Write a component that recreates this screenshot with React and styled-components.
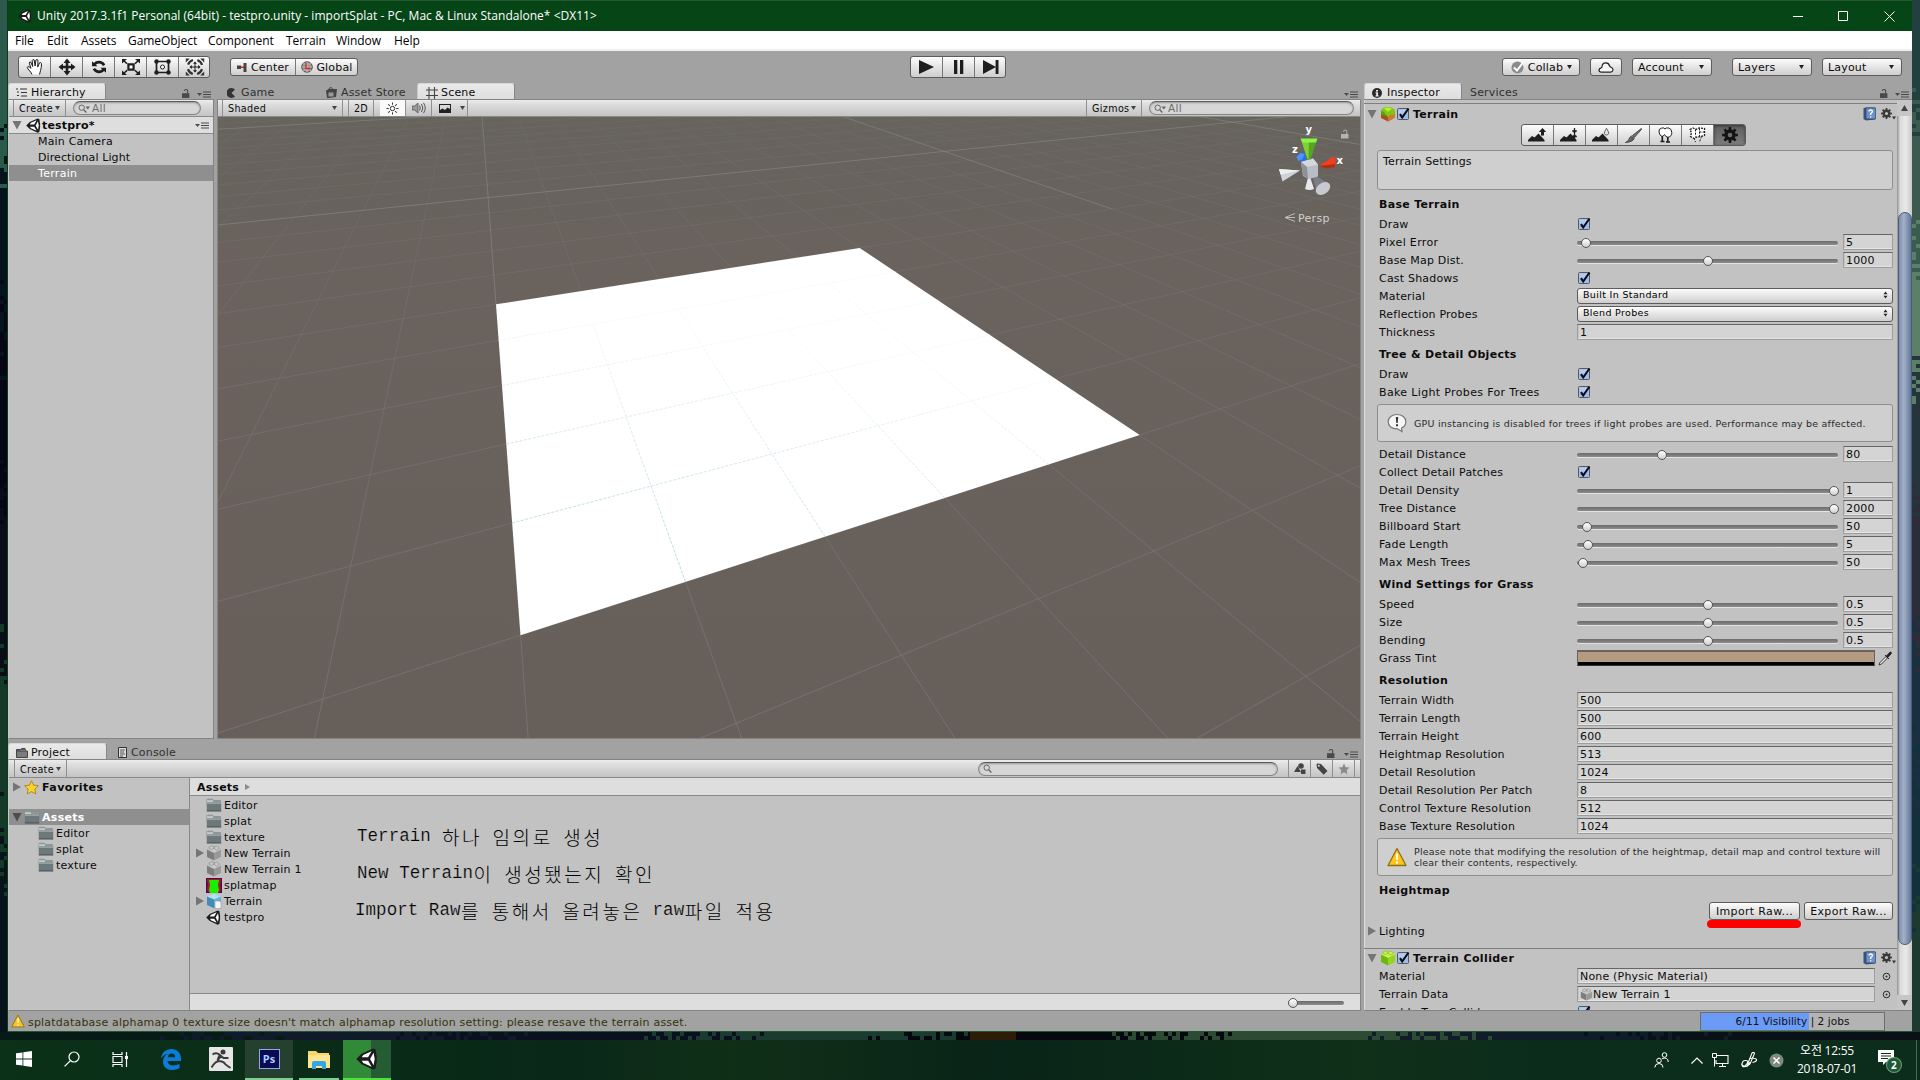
import React from 'react';
import styled, { createGlobalStyle, css } from 'styled-components';

const Global = createGlobalStyle`
  html, body { margin: 0; padding: 0; background: #0b1e16; overflow: hidden; }
  *, *::before, *::after { box-sizing: border-box; }
  svg { display: block; flex: none; }
`;

/* ---------- shell ---------- */
const Screen = styled.div`
  width: 1920px; height: 1080px; display: flex; flex-direction: column; overflow: hidden;
  font: 11px/14px "DejaVu Sans", "Noto Sans CJK KR", sans-serif;
  letter-spacing: 0.18px; color: #0c0c0c; white-space: nowrap; cursor: default;
`;
const Desktop = styled.div`
  height: 1040px; flex: none; display: grid; grid-template: 1032px 8px / 8px 1904px 8px;
`;
const Bottom = styled.div`grid-column: 1 / 4;`;
const Win = styled.div`
  display: flex; flex-direction: column; background: #a2a2a2; border-bottom: 1px solid #1c5a2e;
  box-shadow: 1px 0 0 #1c5a2e, -1px 0 0 #0d3a1c;
  & > * { flex: none; }
`;
const TitleBar = styled.div`
  height: 31px; background: #064516; border-top: 1px solid #25582f; color: #fff; display: flex; align-items: center;
  padding-left: 10px; font: 12px/16px "Open Sans", sans-serif; letter-spacing: 0.02px;
`;
const TitleText = styled.div`margin-left: 5px; flex: 1;`;
const WinButton = styled.div`width: 46px; height: 30px; display: grid; place-items: center; padding-left: ${p => p.$pl || 0}px;`;
const MenuBar = styled.div`
  height: 20px; background: #fff; border-bottom: 2px solid #f0f0f0; display: flex; padding: 1px 0 0 7px;
  font: 12px/18px "Open Sans", sans-serif; letter-spacing: -0.05px; color: #000;
`;
const MenuItem = styled.span`width: ${p => p.$w}px;`;

const ToolStrip = styled.div`height: 32px; display: flex; padding: 5px 10px 0; align-items: flex-start;`;
const bevel = css`
  border: 1px solid #5c5c5c; border-radius: 3px;
  background: linear-gradient(#fcfcfc, #e8e7e7 45%, #cfcdcd);
`;
const ButtonGroup = styled.div`
  ${bevel}
  display: flex; height: ${p => p.$h || 22}px; margin-left: ${p => p.$ml || 0}px; margin-top: ${p => p.$mt || 0}px;
  width: ${p => p.$w ? p.$w + 'px' : 'auto'}; overflow: hidden;
`;
const GroupItem = styled.div`
  width: ${p => p.$w || 32}px; display: flex; align-items: center; justify-content: center; gap: 3px; flex: none;
  ${p => !p.$first && css`border-left: 1px solid #787878;`}
  ${p => p.$on && css`background: linear-gradient(#5f5f5f, #7d7d7d); box-shadow: inset 0 1px 3px #333;`}
`;
const Caption = styled.span`padding-top: 1px;`;
const Spacer = styled.div`flex: 1;`;
const DropButton = styled.div`
  ${bevel}
  height: 18px; width: ${p => p.$w}px; margin: 2px 0 0 ${p => p.$ml || 0}px; display: flex; align-items: center;
  justify-content: ${p => p.$center ? 'center' : 'space-between'}; padding: 0 ${p => p.$center ? 0 : `7px 0 ${p.$pl || 5}px`};
`;
const Body = styled.div`height: 928px; display: flex; gap: 3px;`;
const LeftSide = styled.div`width: 1353px; display: flex; flex-direction: column; gap: 4px; flex: none;`;
const TopRow = styled.div`height: 656px; display: flex; gap: 3px; flex: none;`;

/* ---------- panels ---------- */
const Panel = styled.div`
  width: ${p => p.$w ? p.$w + 'px' : 'auto'}; height: ${p => p.$h}px; display: flex; flex-direction: column; flex: none;
`;
const TabRow = styled.div`height: 16px; display: flex; align-items: stretch; flex: none;`;
const Tab = styled.div`
  width: ${p => p.$w}px; padding-left: ${p => p.$pl || 7}px; display: flex; align-items: center; gap: ${p => p.$gap || 4}px;
  color: ${p => p.$on ? '#0c0c0c' : '#303030'}; padding-top: 3px; line-height: 14px;
  ${p => p.$on && css`
    background: linear-gradient(#e9e9e9, #dedede); border: 1px solid #878787; border-top-color: #d8d8d8; border-bottom: 0; border-left-color: #c8c8c8;
    border-radius: 3px 3px 0 0; padding-top: 2px;`}
`;
const TabTools = styled.div`margin-left: auto; display: flex; align-items: flex-end; gap: ${p => p.$gap || 5}px; padding: 0 3px 1px 0;`;
const RowTools = styled.div`margin-left: auto; display: flex; padding-right: 4px;`;
const Frame = styled.div`
  flex: 1; min-height: 0; background: #c2c2c2; border: 1px solid #838383; display: flex; flex-direction: column;
  ${p => p.$noLeft && css`border-left-color: #c9c9c9;`}
`;
const Bar = styled.div`
  height: ${p => p.$h || 17}px; background: linear-gradient(#ececec, #dcdcdc 30%, #c4c4c4); border-bottom: 1px solid #8a8a8a;
  display: flex; align-items: center; font-size: 9.6px; letter-spacing: 0.35px; flex: none;
`;
const BarCell = styled.div`
  width: ${p => p.$w}px; height: 100%; display: flex; align-items: center; justify-content: ${p => p.$center ? 'center' : 'space-between'};
  padding: 0 ${p => p.$center ? 0 : '5px'}; border-right: ${p => p.$nr ? 0 : 1}px solid #8f8f8f; flex: none;
  ${p => p.$left && css`border-left: 1px solid #8f8f8f;`}
  ${p => p.$on && css`background: #fafafa;`}
`;
const BarText = styled.span`padding-top: 2px;`;
const Search = styled.div`
  height: 14px; width: ${p => p.$w}px; margin-left: ${p => p.$ml || 0}px; border-radius: 7px; border: 1px solid #858585; border-top-color: #5c5c5c;
  background: #d6d6d6; box-shadow: inset 0 1px 2px #999; display: flex; align-items: center; gap: 1px; padding-left: 4px; color: #6d6d6d;
  font-size: 10.5px; line-height: 12px; flex: none;
`;

/* ---------- trees ---------- */
const Row = styled.div`
  height: ${p => p.$h || 16}px; display: flex; align-items: center; padding-left: ${p => p.$pl || 0}px; flex: none;
  font-weight: ${p => p.$bold ? 700 : 400};
  background: ${p => p.$sel ? '#8f8f8f' : p.$light ? '#dedede' : 'transparent'};
  color: ${p => p.$sel ? '#fff' : '#0c0c0c'};
  ${p => p.$line && css`border-bottom: 1px solid #8a8a8a;`}
  ${p => p.$tight && css`margin-bottom: -1px;`}
`;
const Name = styled.span`padding-top: 2px; letter-spacing: ${p => p.$ls === undefined ? 'inherit' : p.$ls + 'px'};`;
const IconSlot = styled.span`width: ${p => p.$w}px; display: flex; flex: none;`;
const ProjectBody = styled.div`flex: 1; display: flex; min-height: 0;`;
const TreeCol = styled.div`width: 181px; border-right: 1px solid #8a8a8a; display: flex; flex-direction: column; flex: none;`;
const ListCol = styled.div`flex: 1; display: flex; flex-direction: column;`;
const ListBody = styled.div`flex: 1; padding-top: 1px; display: flex;`;
const Files = styled.div`width: 167px; display: flex; flex-direction: column;`;
const Notes = styled.div`display: flex; flex-direction: column; padding-top: 21px; color: #000;`;
const Note = styled.div`height: 37px; display: flex; white-space: pre; margin-left: ${p => p.$ml || 0}px;`;
const Latin = styled.span`font: 17.5px/37px "Liberation Mono", monospace; letter-spacing: 0.05px; -webkit-text-stroke: 0.22px #c2c2c2;`;
const Hangul = styled.span`font: 300 19px/37px "Noto Sans CJK KR", sans-serif; letter-spacing: 2.56px; margin-left: 0.5px; margin-right: -0.5px;`;
const ListFoot = styled.div`height: 17px; flex: none; background: #dedede; border-top: 1px solid #8a8a8a; display: flex; align-items: center; justify-content: flex-end; padding-right: 16px;`;

/* ---------- inspector ---------- */
const InspectorBody = styled.div`flex: 1; min-height: 0; display: flex; border-top: 1px solid #838383; border-bottom: 1px solid #838383; background: #c2c2c2;`;
const InspectorList = styled.div`width: 533px; overflow: hidden; display: flex; flex-direction: column; box-shadow: inset 1px 0 0 #dcdcdc; flex: none;`;
const CompHead = styled.div`
  height: ${p => p.$h}px; border-top: 1px solid #7f7f7f; display: flex; align-items: center; padding: 0 2px 0 3px; font-weight: 700; flex: none;
  margin-top: ${p => p.$mt || 0}px; letter-spacing: 0.3px;
`;
const TerrainTools = styled.div`display: flex; height: 23px; padding: 1px 0 0 157px; flex: none;`;
const HelpBox = styled.div`
  margin: ${p => p.$m || '3px'} 4px ${p => p.$mb === undefined ? 3 : p.$mb}px 13px; height: ${p => p.$h || 38}px; flex: none; border: 1px solid #8e8e8e; border-radius: 3px; background: #cfcfcf;
  display: flex; align-items: ${p => p.$top ? 'flex-start' : 'center'}; padding: ${p => p.$top ? '4px 5px' : '0 9px'}; gap: 7px; color: ${p => p.$top ? '#0c0c0c' : '#2a2a2a'};
  ${p => !p.$top && css`font-size: 9.5px; line-height: 11px; letter-spacing: ${p.$ls || 0.2}px;`}
`;
const Head = styled.div`height: 24px; line-height: 27px; padding-left: 15px; font-weight: 700; flex: none; letter-spacing: 0.3px;`;
const Prop = styled.div`height: 18px; display: flex; align-items: center; padding: 0 4px 0 15px; flex: none;`;
const Label = styled.div`width: 198px; flex: none; padding-top: 1px; letter-spacing: ${p => p.$ls || 0.2}px;`;
const Nudge = styled.div`padding-left: 1px;`;
const Field = styled.div`
  height: 16px; ${p => p.$w ? css`width: ${p.$w}px; flex: none;` : css`flex: 1;`}
  border: 1px solid #9d9d9d; border-top-color: #666; background: #d4d4d4; padding: 1px 0 0 2px; line-height: 14px; display: flex; align-items: center;
  box-shadow: inset 0 -1px 0 #e4e4e4, inset 1px 0 0 #c4c4c4;
`;
const Track = styled.div`
  width: ${p => p.$w || 261}px; height: 16px; display: flex; align-items: center; flex: none; margin-right: ${p => p.$mr === undefined ? 5 : p.$mr}px; padding-top: 2px; position: relative;
  &::before { content: ""; width: 100%; height: 4px; border-radius: 2px; background: linear-gradient(#6b6b6b, #8c8c8c); box-shadow: 0 1px 0 #e2e2e2; }
`;
const Knob = styled.div`
  position: absolute; width: 10px; height: 10px; top: 4px; border-radius: 50%; border: 1px solid #585858; background: linear-gradient(#fff, #cfcfcf);
`;
const Select = styled.div`
  ${bevel} flex: 1; height: 16px; font-size: 9.5px; letter-spacing: 0.34px; line-height: 12px; display: flex; align-items: center; justify-content: space-between; padding: 0 4px 2px 5px; color: #000;
`;
const Swatch = styled.div`width: 298px; height: 16px; flex: none; border: 1px solid #6a625c; border-top-width: 2px; background: #b49a80; border-bottom: 1px solid #333; box-shadow: inset 0 -3px 0 #000; margin-right: 3px;`;
const Buttons = styled.div`height: 21px; display: flex; justify-content: flex-end; gap: 4px; padding: 1px 4px 0 0; flex: none;`;
const PushButton = styled.div`
  ${bevel} height: 18px; width: ${p => p.$w}px; display: flex; justify-content: center; align-items: center; position: relative; letter-spacing: 0.35px; padding-top: 1px;
`;
const Mark = styled.div`position: absolute; left: -3px; top: 17px; width: 94px; height: 8px; border-radius: 4px; background: #fd0000;`;
const Scroll = styled.div`
  width: 15px; display: flex; flex-direction: column; align-items: center; background: linear-gradient(90deg, #8f8f8f, #dadada 20%, #e9e9e9 60%, #c8c8c8);
`;
const ScrollGap = styled.div`height: ${p => p.$h}px; width: 15px; flex: none; display: grid; place-items: center; ${p => p.$cap && css`background: #c6c6c6;`}`;
const Thumb = styled.div`width: 14px; height: 733px; flex: none; border-radius: 7px; border: 1px solid #4c5a73; background: linear-gradient(90deg, #7c8fae, #a3b1c8 40%, #63789b);`;

/* ---------- status + taskbar ---------- */
const Status = styled.div`height: 20px; display: flex; align-items: center; padding: 0 27px 0 3px; color: #33330a; letter-spacing: 0.2px;`;
const StatusText = styled.span`padding-top: 4px;`;
const Progress = styled.div`
  margin-left: auto; width: 185px; height: 19px; border: 1px solid #6c6c6c; background: linear-gradient(90deg, #6b9bf7 0 108px, #b3b3b3 108px);
  text-align: center; line-height: 16px; font-size: 10.5px; color: #101010; letter-spacing: 0.05px;
`;
const Taskbar = styled.div`
  height: 40px; flex: none; display: flex; color: #fff;
  background: linear-gradient(90deg, #0b3118, #092a17 22%, #0a2818 30%, #102f17 38%, #092418 52%, #0d2c18 64%, #11301a 71%, #0b2c1b 80%, #0c2d1b);
`;
const Task = styled.div`
  width: ${p => p.$w || 48}px; display: grid; place-items: center; background: ${p => p.$bg || 'none'};
  border-bottom: 2px solid ${p => p.$line || 'transparent'}; margin: 0 ${p => p.$m || 0}px;
`;
const PsTile = styled.div`
  width: 21px; height: 20px; border: 1px solid #8fa9dc; background: #0a0a55; color: #a8cfff; text-align: center; font: 700 11px/17px "Open Sans", sans-serif; letter-spacing: 0;
`;
const Tray = styled.div`display: flex; align-items: center; margin-left: auto;`;
const TrayIcon = styled.div`width: ${p => p.$w}px; display: flex; justify-content: center; margin-right: ${p => p.$mr || 0}px;`;
const Clock = styled.div`width: 80px; text-align: center; font: 12px/18px "Open Sans", "Noto Sans CJK KR", sans-serif; letter-spacing: -0.25px;`;
const Peek = styled.div`width: 4px; height: 40px; border-left: 1px solid #4d6a56;`;
const Badge = styled.div`position: relative; width: 24px; height: 20px;`;
const Count = styled.div`
  position: absolute; left: 9px; top: 8px; width: 14px; height: 14px; border-radius: 50%; background: #1d5a35; box-shadow: 0 0 0 1px #6f9c7d;
  text-align: center; font: 700 10px/14px "Open Sans", sans-serif;
`;

/* ---------- icons ---------- */
const Caret = ({ s = 5, c = '#444' }) => <svg width={s} height={s - 1} viewBox="0 0 5 4"><path d="M0 0h5L2.5 4z" fill={c} /></svg>;
const Fold = ({ open, c = '#757575' }) => (
  <svg width="10" height="10" viewBox="0 0 10 10"><path d={open ? 'M0.5 1h9L5 9.5z' : 'M1 0.5v9L9 5z'} fill={c} /></svg>
);
const UnityLogo = ({ s = 14, face = '#fff' }) => (
  <svg width={s} height={s} viewBox="0 0 20 20">
    <path d="M.3 10 5 5.300 15.500.5l2.300.9L19 9l-.6 1 .6 1-1.200 7.600-2.300.9L5 14.700z" fill="#1c1c1c" />
    <path d="M5.200 8.400 6.600 6.300 14.200 3 11 8.500H5.500zM5.200 11.600 6.600 13.700 14.200 17 11 11.500H5.500zM12.800 10 16 4.300 17 10 16 15.700z" fill={face} />
  </svg>
);
const Lock = ({ c = '#4a4a4a' }) => (
  <svg width="8" height="9" viewBox="0 0 8 9"><path d="M0 4.2h7.4V9H0z" fill={c} /><path d="M2 1.8Q3.7-.4 5.6 1.2V4.4" fill="none" stroke={c} strokeWidth="1.1" /></svg>
);
const PaneMenu = () => (
  <svg width="14" height="7" viewBox="0 0 14 7"><path d="M0 2h5L2.5 5z" fill="#4a4a4a" /><path d="M6 1h8M6 3.5h8M6 6h8" stroke="#4a4a4a" strokeWidth="1.2" /></svg>
);
const Glass = ({ arrow }) => (
  <svg width={arrow ? 13 : 10} height="9" viewBox={arrow ? '0 0 13 9' : '0 0 10 9'}>
    <circle cx="3.7" cy="3.7" r="2.7" fill="none" stroke="#666" /><path d="M5.8 5.8 8.4 8.4" stroke="#666" strokeWidth="1.4" />
    {arrow && <path d="M7.5 2.5H12L9.8 5.5z" fill="#666" />}
  </svg>
);
const Folder = ({ w = 16 }) => (
  <svg width={w} height="14" viewBox="0 0 16 14">
    <path d="M0.5 3V2Q.5.7 2 .7h4Q7.3.7 7.5 2h6.5q1 0 1 1v9.5H1z" fill="#8d9799" /><path d="M1 2.200h6v2H1z" fill="#c3caca" />
    <path d="M0.8 4.500h14.400v8.500H.8z" fill="#6c787a" /><path d="M1 4.500h14v1.300H1z" fill="#a3acad" /><path d="M.8 13h14.400" stroke="#444e50" />
  </svg>
);
const SmallFolder = () => <svg width="12" height="10" viewBox="0 0 12 10"><path d="M.5 3V1.5h4L5.500 .5H9L9.500 2.500" fill="#666" stroke="#444" /><path d="M.5 3h11v6.5H.5z" fill="#7c7c7c" stroke="#444" /></svg>;
const Cube = ({ a = '#c8c8c8', b = '#999', c = '#7d7d7d', s = 16 }) => (
  <svg width={s} height={s} viewBox="0 0 16 16">
    <path d="M1 4.5 8 1.300l7 3.200-7 3.600z" fill={a} /><path d="M1 4.500l7 3.600v7.400L1 12z" fill={c} /><path d="M15 4.500l-7 3.600v7.400L15 12z" fill={b} />
    <path d="M3 3.600V2l3-1.300 2 1v1.500L5.500 4.500zM8 3.400V2l2.500-1 2.500 1.300v1.500L10.500 5z" fill={a} stroke={c} strokeWidth=".5" />
  </svg>
);
const TerrainCube = () => (
  <svg width="16" height="16" viewBox="0 0 16 16">
    <path d="M1 4.500 8 1l7 3.500v7L8 15.500 1 12z" fill="#a4531c" /><path d="M8 8v7.500l7-4V5z" fill="#cf7a2b" />
    <path d="M1 4 4 1.500 8 1l4 .8L15 4v3l-2 2-2-1-3 3-3-3-2 1-2-2z" fill="#7cc814" /><path d="M4 2.200 8 1.500l4 1.200-4 3z" fill="#c3ee2c" /><path d="M1 5l3 1 2 3-1 1-2-1-2-1z" fill="#5aa010" />
  </svg>
);
const Prefab = () => (
  <svg width="16" height="16" viewBox="0 0 16 16"><path d="M1 3.500 8 1l7 2.500L8 6.500z" fill="#b5e0f3" /><path d="M1 3.500 8 6.500v8.800L1 12z" fill="#3f8db8" /><path d="M15 3.500 8 6.500v8.800l7-3z" fill="#63b4dc" /><path d="M9 8h4.500L15 9.500V15.500H9z" fill="#f4f4f4" stroke="#888" strokeWidth=".5" /></svg>
);
const SplatIcon = () => (
  <svg width="16" height="15" viewBox="0 0 16 15"><path d="M0 0h16v15H0z" fill="#4b0a50" /><path d="M1 1h14v3l-1 3 1 4-1 3H2l-1-3 1-5-1-3z" fill="#b3112d" /><path d="M3 2h10l-1 5 1 5-1 3H4L3 12l1-5z" fill="#18f000" /></svg>
);
const Check = () => (
  <svg width="13" height="14" viewBox="0 0 13 14">
    <rect x=".5" y="1.500" width="11" height="11" rx="1" fill="#9fbce6" stroke="#4f5a6a" /><path d="M1.500 2.500h9v4h-9z" fill="#b6cbeb" />
    <path d="M3 7.200 5.200 10.500 11.500 1.500" fill="none" stroke="#0a0a14" strokeWidth="2.100" />
  </svg>
);
const Book = () => (
  <svg width="13" height="14" viewBox="0 0 13 14"><path d="M.5 1 3 .5h9v12L3 13.500.5 12z" fill="#39547d" /><path d="M3 1h9.500v11H3z" fill="#6f93c7" stroke="#27436e" strokeWidth=".7" /><path d="M6 4.600Q6 3 7.700 3t1.700 1.500Q9.400 5.500 7.700 6.500V8M7.700 9.200v1.300" stroke="#fff" strokeWidth="1.300" fill="none" /></svg>
);
const teeth = n => Array.from({ length: n }, (_, i) => (360 / n) * i);
const Cog = ({ s = 12, c = '#3a3a3a', n = 8 }) => (
  <svg width={s} height={s} viewBox="-8 -8 16 16"><circle r="4" fill="none" stroke={c} strokeWidth="3.400" />{teeth(n).map(a => <path key={a} d="M-1.300-5H1.300V-7.900H-1.300z" fill={c} transform={`rotate(${a})`} />)}</svg>
);
const GearMenu = () => <IconSlot $w={14}><Cog s={11} /><svg width="4" height="12" viewBox="0 0 4 12"><path d="M0 8.500h4L2 11.500z" fill="#333" /></svg></IconSlot>;
const Warn = ({ s = 14 }) => (
  <svg width={s} height={s} viewBox="0 0 20 20"><path d="M10 1.500 19 18.500H1z" fill="#fcc41d" stroke="#8e7216" strokeWidth="1.300" strokeLinejoin="round" /><path d="M9 6.500h2.200L10.800 13H9.300zM9 14.500h2v2H9z" fill="#fff" /></svg>
);
const Info = () => (
  <svg width="20" height="20" viewBox="0 0 20 20"><path d="M10 1.500c5 0 8.800 3 8.800 7.200 0 3-1.800 5.300-4.300 6.300l.5 3.500-4.500-2.700C4.500 16 1.200 13 1.200 8.700 1.200 4.500 5 1.500 10 1.500z" fill="#f5f5f5" stroke="#777" strokeWidth="1.200" /><path d="M8.800 4h2.400l-.5 6H9.300zM9 11.300h2v2H9z" fill="#333" /></svg>
);
const Updown = () => <svg width="5" height="8" viewBox="0 0 5 8"><path d="M.5 3.200 2.500 .5 4.500 3.200zM.5 4.800 2.500 7.500 4.500 4.800z" fill="#222" /></svg>;
const Target = () => <svg width="9" height="9" viewBox="0 0 9 9"><circle cx="4.500" cy="4.500" r="3.300" fill="none" stroke="#2c2c2c" /><circle cx="4.500" cy="4.500" r="1" fill="#2c2c2c" /></svg>;
const Dropper = () => (
  <svg width="14" height="15" viewBox="0 0 14 15"><path d="M1 14 2 11.500 8 5.500l1.500 1.500L3.500 13z" fill="#eee" stroke="#333" /><path d="M7 4l4 4M8.500 5 11 2.200Q12.500.5 13.200 1.400T12 4L9.700 6.500z" fill="#222" stroke="#222" /></svg>
);
const star = 'M10 1l2.800 5.900 6.400.8-4.700 4.500 1.200 6.400L10 15.500l-5.700 3.100 1.200-6.400L.8 7.700l6.400-.8z';
const Star = ({ s, fill, stroke = 'none' }) => <svg width={s} height={s} viewBox="0 0 20 20"><path d={star} fill={fill} stroke={stroke} strokeWidth="1.200" /></svg>;

const D = '#1e1e1e';
const toolIcons = [
  <svg width="18" height="18" viewBox="0 0 18 18"><path d="M6 16.500Q5.500 14.500 2 11 .8 9.300 1.800 8.700T5 10.300L3.300 5.200Q3.200 3.500 4.700 4L6.700 8.500 6.200 2.300Q6.800.8 8.200 2l.9 6 .8-6Q11 .8 12 2.300L11.700 9 13.600 4.800Q15 4 15.500 5.500 15.500 10 14.500 12.500L13.500 16.500" fill="#fff" stroke={D} strokeWidth="1" strokeLinejoin="round" /></svg>,
  <svg width="18" height="18" viewBox="0 0 18 18"><path d="M9 2v14M2 9h14" stroke={D} strokeWidth="2.600" /><path d="M9 .5l3.500 4.500h-7zM9 17.500l3.500-4.500h-7zM.5 9l4.500-3.500v7zM17.500 9l-4.500-3.500v7z" fill={D} /></svg>,
  <svg width="16" height="14" viewBox="0 0 16 14"><path d="M3 5Q4.800 2.200 8 2.200T13.200 5.200M13 9Q11.200 11.800 8 11.800T2.800 8.800" fill="none" stroke={D} strokeWidth="2.700" /><path d="M1 1.200v5h5.500zM15 12.800v-5H9.500z" fill={D} /></svg>,
  <svg width="18" height="16" viewBox="0 0 18 16"><path d="M6.400 5.400h5.200v5.200H6.400z" fill="#fff" stroke={D} strokeWidth="2.200" /><path d="M1 1l4 3.600M17 1l-4 3.600M1 15l4-3.600M17 15l-4-3.600" stroke={D} strokeWidth="1.500" /><path d="M0 0h5L0 4.500zM18 0h-5l5 4.500zM0 16h5l-5-4.500zM18 16h-5l5-4.500z" fill={D} /></svg>,
  <svg width="17" height="16" viewBox="0 0 17 16"><path d="M2.500 2.500h12v11h-12z" fill="none" stroke={D} strokeWidth="1.700" /><circle cx="2.500" cy="2.500" r="2.200" fill={D} /><circle cx="14.500" cy="2.500" r="2.200" fill={D} /><circle cx="2.500" cy="13.500" r="2.200" fill={D} /><circle cx="14.500" cy="13.500" r="2.200" fill={D} /><circle cx="8.500" cy="8" r="2" fill="#fff" stroke={D} /></svg>,
  <svg width="20" height="18" viewBox="0 0 20 18"><circle cx="10" cy="9" r="7.300" fill="none" stroke="#333" strokeWidth="2.200" strokeDasharray="7 4.470" strokeDashoffset="-2.200" /><path d="M10 4.500v9M5.500 9h9" stroke={D} /><path d="M10 3.500l2 2.300H8zM10 14.500l2-2.300H8zM4.500 9l2.300-2v4zM15.500 9l-2.300-2v4z" fill={D} /><path d="M.8.500h4L.8 4.500zM19.200.5h-4l4 4zM.8 17.500h4l-4-4zM19.200 17.500h-4l4-4z" fill="#333" /></svg>,
];
const playIcons = [
  <svg width="15" height="14" viewBox="0 0 15 14"><path d="M0 0 15 7 0 14z" fill={D} /></svg>,
  <svg width="10" height="14" viewBox="0 0 10 14"><path d="M0 0h3.300v14H0zM6 0h3.300v14H6z" fill={D} /></svg>,
  <svg width="16" height="14" viewBox="0 0 16 14"><path d="M0 0 13 7 0 14zM12.600 0H15.500v14H12.600z" fill={D} /></svg>,
];
const hills = 'M0 13.500V12L4 8l2.500 1.500L10.500 5.500l6 6.500v1.500z';
const terrainIcons = [
  <svg width="19" height="15" viewBox="0 0 19 15"><path d={hills} fill={D} /><path d="M14.500 0 18.200 4H16V7.500h-3V4h-2.200z" fill={D} /></svg>,
  <svg width="19" height="15" viewBox="0 0 19 15"><path d={hills} fill={D} /><path d="M14.500-.5v12M12.200 3h4.600M12.200 8.500h4.600" stroke={D} strokeWidth="1.300" /><path d="M12.700 4.200h3.600L14.500 2zM12.700 7.200h3.600l-1.800 2.300z" fill={D} /></svg>,
  <svg width="19" height="15" viewBox="0 0 19 15"><path d={hills} fill={D} /><path d="M14.500.3Q16.800 4 16.700 5.300 16.200 7 14.500 7T12.300 5.300Q12.200 4 14.500.3z" fill="#e4e4e4" stroke="#555" strokeWidth=".9" /></svg>,
  <svg width="17" height="15" viewBox="0 0 17 15"><path d="M16.300.5 7.500 7.500l2 1.800L16.800 1z" fill="#777" stroke="#333" strokeWidth=".8" /><path d="M6.500 8l2.700 2.300Q8 14 .5 14.500 4.500 12.500 4.700 9.500z" fill="#666" stroke="#333" strokeWidth=".8" /></svg>,
  <svg width="15" height="16" viewBox="0 0 15 16"><path d="M4.300 9v5.500H2.500h4M9.800 10v5H8h4" stroke={D} strokeWidth="1.700" fill="none" /><path d="M3.500 1.200Q.5 1.500 1 5T4 9.500Q5.500 9 6.500 7.500 7.500 10 10 10.300 14 9.500 13.800 5.500T10.500 1Q8 .5 7 2 5.500.2 3.500 1.200z" fill="#fff" stroke={D} strokeWidth="1" /></svg>,
  <svg width="17" height="16" viewBox="0 0 17 16"><path d="M1 2.500l3-1.500 3 1.500L10 1l5.500.5v7L12 9.500 8 10 5 11.500 1.500 9.500 2.500 6z" fill="#fff" stroke={D} strokeDasharray="2 1" strokeWidth="1.300" /><path d="M5 11l1.500 4M12.500 9.500l-2 5.500M6.500 2.500v7M10.500 1.500v8M10.500 5h5" stroke={D} strokeDasharray="2 1.200" /></svg>,
  <Cog s={16} c="#141414" n={8} />,
];

/* ---------- scene ---------- */
const corners = [[520.5, 635.2], [1139.6, 435], [859.7, 248], [496, 304.3]];
const H = (() => {
  const [[x0, y0], [x1, y1], [x2, y2], [x3, y3]] = corners;
  const dx1 = x1 - x2, dx2 = x3 - x2, sx = x0 - x1 + x2 - x3;
  const dy1 = y1 - y2, dy2 = y3 - y2, sy = y0 - y1 + y2 - y3;
  const det = dx1 * dy2 - dx2 * dy1;
  const g = (sx * dy2 - dx2 * sy) / det, h = (dx1 * sy - sx * dy1) / det;
  return { a: x1 - x0 + g * x1, b: x3 - x0 + h * x3, c: x0, d: y1 - y0 + g * y1, e: y3 - y0 + h * y3, f: y0, g, h };
})();
const depth = (u, v) => 1 + (H.g * u + H.h * v) / 5;
const project = (u, v) => {
  const w = depth(u, v);
  return [(H.c + (H.a * u + H.b * v) / 5) / w, (H.f + (H.d * u + H.e * v) / 5) / w].map(n => n.toFixed(1));
};
const segment = (f, lo, hi) => {
  let s = null, e = null;
  for (let t = lo; t <= hi; t += 0.1) {
    const [u, v] = f(t);
    if (depth(u, v) > 0.12) { if (s === null) s = t; e = t; }
  }
  if (s === null) return '';
  return `M${project(...f(s)).join(' ')}L${project(...f(e)).join(' ')}`;
};
const range = (a, b) => Array.from({ length: b - a + 1 }, (_, i) => a + i);
const minor = range(-24, 44).map(k => segment(t => [k, t], -24, 44) + segment(t => [t, k], -24, 44)).join('');
const major = [-10, 0, 10, 20].map(k => segment(t => [k, t], 5, 100)).join('') + [10, 20].map(k => segment(t => [t, k], -60, 100)).join('');
const inner = [1, 2, 3, 4].map(k => segment(t => [k, t], 0, 4.1) + segment(t => [t, k], 0, 5)).join('');

const Scene = () => (
  <svg width="1142" height="621" viewBox="218 117 1142 621">
    <defs>
      <linearGradient id="fade" x1="0" y1="0" x2="0" y2="1"><stop offset="0" stopColor="#fff" stopOpacity=".25" /><stop offset=".25" stopColor="#fff" stopOpacity=".45" /><stop offset="1" stopColor="#fff" stopOpacity=".9" /></linearGradient>
      <mask id="m" maskUnits="userSpaceOnUse" x="218" y="117" width="1142" height="621"><rect x="218" y="117" width="1142" height="621" fill="url(#fade)" /></mask>
      <linearGradient id="lines" gradientUnits="userSpaceOnUse" x1="600" y1="320" x2="560" y2="600"><stop offset="0" stopColor="#f2f8fa" /><stop offset="1" stopColor="#98c8d4" /></linearGradient>
      <linearGradient id="sky" x1="0" y1="0" x2="0" y2="1"><stop offset="0" stopColor="#67635d" /><stop offset=".3" stopColor="#6a625d" /><stop offset="1" stopColor="#67605a" /></linearGradient>
    </defs>
    <rect x="218" y="117" width="1142" height="621" fill="url(#sky)" />
    <g mask="url(#m)"><path d={minor} stroke="#85888a" strokeOpacity=".6" strokeWidth=".9" fill="none" /></g>
    <path d={major} stroke="#8c9191" strokeOpacity=".42" strokeWidth="1" fill="none" />
    <path d={`M${corners.map(p => p.join(' ')).join('L')}z`} fill="#fff" />
    <path d={inner} stroke="url(#lines)" strokeWidth=".8" strokeDasharray="3 1.500" fill="none" />
    <g fontFamily="DejaVu Sans, sans-serif" fontWeight="700" fontSize="10" fill="#fff">
      <text x="1305.500" y="133">y</text><text x="1292" y="152.500">z</text><text x="1336.500" y="163.500">x</text>
    </g>
    <path d="M1296.500 156l4-3.500 5 1 1 7-6 1z" fill="#2b6fe6" /><path d="M1296.500 157l4-4 4 1-2 5-4 2z" fill="#4c93ff" />
    <path d="M1300 170.500 1279 169l3.500 12.500z" fill="#d0d3d8" /><path d="M1279 169l21 1.500-19.500 4z" fill="#eceef0" />
    <path d="M1309 174l5 15q-4.500 2-9 0z" fill="#e8e8ea" />
    <path d="M1312 174l17 9.500-12 9.500z" fill="#7a7e84" /><ellipse cx="1323" cy="188.500" rx="8" ry="5.500" fill="#c8cacf" transform="rotate(-35 1323 188.500)" />
    <path d="M1301 162l12-3.500 5 6v12l-9 2.500-6-3z" fill="#b9bdc6" /><path d="M1301 162l12-3.500 5 6-11 2.500z" fill="#d4d7de" /><path d="M1301 162l6 5 1 12-5-4z" fill="#8d9199" />
    <path d="M1301 139.500h16l-6.500 20h-3z" fill="#56a520" /><path d="M1301 139.500h8l-.5 20h-1z" fill="#7fcf35" /><path d="M1300.500 138.500h17l-1.500 4h-13.500z" fill="#8bf545" />
    <path d="M1319 166l13.500-9 3 1v8.500l-7 1.500z" fill="#f2401c" /><path d="M1319 166l16-2v3l-8 1.500z" fill="#b32c10" />
    <path d="M1341 134h7.500v4.500h-7.500z" fill="#b6b3b1" /><path d="M1343 131.500q2-2.500 3.800-.7v3.700" fill="none" stroke="#b6b3b1" />
    <path d="M1295 213.500l-10 4 10 4M1285 217.500h10" fill="none" stroke="#c6c4c2" strokeWidth=".9" />
    <text x="1298" y="221.500" fontFamily="DejaVu Sans, sans-serif" fontSize="11" letterSpacing=".3" fill="#d3d1cf">Persp</text>
  </svg>
);

/* ---------- wallpaper ---------- */
const palettes = {
  left: ['#2b5a4c', '#04141a', '#050612', '#0a0d18', '#123a26', '#06131a'],
  right: ['#234040', '#3d5a50', '#5c7f68', '#26343c', '#2d2d3a', '#1a2f40', '#15303d', '#1c3a30'],
  bottom: ['#061a16', '#101a2a', '#0a1020', '#1b3a30', '#05080e', '#2c4a34', '#101c2a', '#0a1018'],
};
const Wallpaper = ({ w, h, kind }) => {
  const cols = palettes[kind];
  const long = Math.max(w, h);
  const cells = [];
  let seed = kind.length * 97;
  const rnd = () => ((seed = (seed * 16807) % 2147483647) / 2147483647);
  for (let t = 0; t < long; t += 4) {
    for (let k = 0; k < 8; k += 4) {
      const base = cols[Math.min(cols.length - 1, Math.floor((t / long) * cols.length + (rnd() - 0.5) * 0.7 + 0.1))] || cols[0];
      cells.push(w > h ? <rect key={t + '-' + k} x={t} y={k} width="4" height="4" fill={base} /> : <rect key={t + '-' + k} x={k} y={t} width="4" height="4" fill={base} />);
    }
  }
  return <svg width={w} height={h}>{cells}{kind === 'bottom' && <path d="M970 0h46v8h-46z" fill="#2e1c08" />}</svg>;
};

/* ---------- data ---------- */
const menus = [['File', 32], ['Edit', 34], ['Assets', 47], ['GameObject', 80], ['Component', 78], ['Terrain', 50], ['Window', 58], ['Help', 40]];
const settings = [
  ['head', 'Base Terrain'],
  ['check', 'Draw'], ['slider', 'Pixel Error', '5', 8.5], ['slider', 'Base Map Dist.', '1000', 130.5], ['check', 'Cast Shadows'],
  ['select', 'Material', 'Built In Standard'], ['select', 'Reflection Probes', 'Blend Probes'], ['field', 'Thickness', '1'],
  ['head', 'Tree & Detail Objects'],
  ['check', 'Draw'], ['check', 'Bake Light Probes For Trees'], ['info'],
  ['slider', 'Detail Distance', '80', 84.5], ['check', 'Collect Detail Patches'],
  ['slider', 'Detail Density', '1', 257], ['slider', 'Tree Distance', '2000', 257], ['slider', 'Billboard Start', '50', 9.5],
  ['slider', 'Fade Length', '5', 10.5], ['slider', 'Max Mesh Trees', '50', 5.5],
  ['head', 'Wind Settings for Grass'],
  ['slider', 'Speed', '0.5', 130.5], ['slider', 'Size', '0.5', 130.5], ['slider', 'Bending', '0.5', 130.5], ['color', 'Grass Tint'],
  ['head', 'Resolution'],
  ['field', 'Terrain Width', '500'], ['field', 'Terrain Length', '500'], ['field', 'Terrain Height', '600'], ['field', 'Heightmap Resolution', '513'],
  ['field', 'Detail Resolution', '1024'], ['field', 'Detail Resolution Per Patch', '8'], ['field', 'Control Texture Resolution', '512'], ['field', 'Base Texture Resolution', '1024'],
];
const wideLabels = { 'Bake Light Probes For Trees': 0.35, 'Pixel Error': 0.32, 'Control Texture Resolution': 0.3, 'Max Mesh Trees': 0.3 };
const files = [
  ['Editor', <Folder />], ['splat', <Folder />], ['texture', <Folder />], ['New Terrain', <Cube />, true], ['New Terrain 1', <Cube />],
  ['splatmap', <SplatIcon />], ['Terrain', <Prefab />, true], ['testpro', <UnityLogo s={15} />],
];

const Slider = ({ at, w, mr }) => <Track $w={w} $mr={mr}><Knob style={{ left: at - 5 }} /></Track>;
const Setting = ({ row }) => {
  const [kind, label, value, at] = row;
  if (kind === 'head') return <Head>{label}</Head>;
  if (kind === 'info') return <HelpBox $ls={0.22}><Info /><span>GPU instancing is disabled for trees if light probes are used. Performance may be affected.</span></HelpBox>;
  return (
    <Prop>
      <Label $ls={wideLabels[label]}>{label}</Label>
      {kind === 'check' && <Nudge><Check /></Nudge>}
      {kind === 'slider' && <><Slider at={at} /><Field $w={50}>{value}</Field></>}
      {kind === 'select' && <Select><span>{value}</span><Updown /></Select>}
      {kind === 'field' && <Field>{value}</Field>}
      {kind === 'color' && <><Swatch /><Dropper /></>}
    </Prop>
  );
};
const NoteLine = ({ children, ml }) => (
  <Note $ml={ml}>{children.split(/([가-힣]+)/).map((s, i) => i % 2 ? <Hangul key={i}>{s}</Hangul> : <Latin key={i}>{s}</Latin>)}</Note>
);
const Buttonset = ({ icons, on, ...rest }) => (
  <ButtonGroup {...rest}>{icons.map((ic, i) => <GroupItem key={i} $first={!i} $w={i ? 32 : 31} $on={i === on}>{ic}</GroupItem>)}</ButtonGroup>
);

const Hierarchy = () => (
  <Panel $w={206} $h={656}>
    <TabRow>
      <Tab $on $w={98}><svg width="11" height="10" viewBox="0 0 11 10"><path d="M0 1h2M1 4h2M1 7.500h2M4 1h7M5 4.500h6M5 8h6" stroke="#333" strokeWidth="1.200" /></svg>Hierarchy</Tab>
      <TabTools $gap={7}><Lock /><PaneMenu /></TabTools>
    </TabRow>
    <Frame $noLeft>
      <Bar><BarCell $w={5} $center /><BarCell $w={52}><BarText>Create</BarText><Caret /></BarCell><Search $w={128} $ml={7}><Glass arrow />All</Search></Bar>
      <Row $h={17} $pl={3} $bold $light $line $tight>
        <IconSlot $w={14}><Fold open /></IconSlot><IconSlot $w={16}><UnityLogo s={15} /></IconSlot><Name>testpro*</Name><RowTools><PaneMenu /></RowTools>
      </Row>
      <Row $pl={29}><Name>Main Camera</Name></Row>
      <Row $pl={29}><Name $ls={0.1}>Directional Light</Name></Row>
      <Row $pl={29} $sel><Name $ls={0.3}>Terrain</Name></Row>
    </Frame>
  </Panel>
);

const ScenePanel = () => (
  <Panel $w={1144} $h={656}>
    <TabRow>
      <Tab $w={98} $pl={10} $gap={5}><svg width="9" height="10" viewBox="0 0 9 10"><path d="M8 1.500A5 5 0 1 0 8 8.500L4.500 5z" fill="#333" /></svg>Game</Tab>
      <Tab $w={102} $pl={11} $gap={4}><svg width="11" height="11" viewBox="0 0 11 11"><path d="M0 3.500 3 2h8l-1 8-7 1H1z" fill="#444" /><path d="M3 5V1.500Q5-.5 6.500 1.500V5" stroke="#444" fill="none" /><path d="M2.500 5.500h5v4h-5z" fill="#999" /></svg>Asset Store</Tab>
      <Tab $on $w={98} $pl={8} $gap={3}><svg width="12" height="12" viewBox="0 0 12 12"><path d="M3 0v12M8.500 0v12M0 3h12M0 8.500h12" stroke="#444" strokeWidth="1.100" /></svg>Scene</Tab>
      <TabTools><PaneMenu /></TabTools>
    </TabRow>
    <Frame>
      <Bar>
        <BarCell $w={5} $center />
        <BarCell $w={120}><BarText>Shaded</BarText><Caret /></BarCell>
        <BarCell $w={6} $center />
        <BarCell $w={25} $center><BarText>2D</BarText></BarCell>
        <BarCell $w={6} $center $nr />
        <BarCell $w={26} $center $on><svg width="13" height="13" viewBox="-6.500 -6.500 13 13"><circle r="2.200" fill="none" stroke="#333" />{teeth(8).map(a => <path key={a} d="M0-3.800V-6" stroke="#333" transform={`rotate(${a})`} />)}</svg></BarCell>
        <BarCell $w={26} $center><svg width="14" height="12" viewBox="0 0 14 12"><path d="M0 4h2.500L6 1v10L2.500 8H0z" fill="#999" stroke="#555" strokeWidth=".8" /><path d="M7.500 3.500q1.500 2.500 0 5M9.500 2q2.600 4 0 8M11.500.8q3.500 5.200 0 10.400" fill="none" stroke="#555" /></svg></BarCell>
        <BarCell $w={26} $center $nr><svg width="12" height="9" viewBox="0 0 12 9"><path d="M0 0h12v9H0z" fill="#222" /><path d="M1 1h10v4L8.500 3.500 6 6 3.500 4.500 1 6z" fill="#d8d8d8" /></svg></BarCell>
        <BarCell $w={10} $center><Caret /></BarCell>
        <Spacer />
        <BarCell $w={56} $left><BarText>Gizmos</BarText><Caret /></BarCell>
        <Search $w={205} $ml={7}><Glass arrow />All</Search>
        <IconSlot $w={6} />
      </Bar>
      <Scene />
    </Frame>
  </Panel>
);

const Project = () => (
  <Panel $h={268}>
    <TabRow>
      <Tab $on $w={99} $gap={3}><SmallFolder />Project</Tab>
      <Tab $w={100} $pl={11}><svg width="9" height="11" viewBox="0 0 9 11"><path d="M.5.5h8v10h-8z" fill="#ddd" stroke="#333" /><path d="M2 3h5M2 5h4M2 7h5M2 9h3" stroke="#333" strokeWidth=".8" /></svg>Console</Tab>
      <TabTools $gap={9}><Lock /><PaneMenu /></TabTools>
    </TabRow>
    <Frame $noLeft>
      <Bar $h={18}>
        <BarCell $w={6} $center /><BarCell $w={52}><BarText>Create</BarText><Caret /></BarCell>
        <Spacer />
        <Search $w={300}><Glass /></Search><IconSlot $w={10} />
        <BarCell $w={23} $center $left><svg width="12" height="11" viewBox="0 0 12 11"><circle cx="7" cy="3" r="2.800" fill="#444" /><path d="M0 9l3.500-6L7 9zM7 6.500h4.500V11H7z" fill="#444" /></svg></BarCell>
        <BarCell $w={22} $center><svg width="12" height="12" viewBox="0 0 12 12"><path d="M.5 1 1.500.5 5 1l6.500 7-3.800 3.700L1 5z" fill="#444" /><circle cx="2.800" cy="2.800" r="1" fill="#ddd" /></svg></BarCell>
        <BarCell $w={22} $center><Star s={12} fill="#8a8a8a" /></BarCell>
        <IconSlot $w={5} />
      </Bar>
      <ProjectBody>
        <TreeCol>
          <Row $h={18} $pl={3} $bold><IconSlot $w={12}><Fold /></IconSlot><IconSlot $w={18}><Star s={15} fill="#fbd22c" stroke="#a08420" /></IconSlot><Name $ls={0.45}>Favorites</Name></Row>
          <Row $h={13} />
          <Row $pl={3} $bold $sel><IconSlot $w={12}><Fold open c="#4d4d4d" /></IconSlot><IconSlot $w={18}><Folder /></IconSlot><Name $ls={0.3}>Assets</Name></Row>
          {['Editor', 'splat', 'texture'].map(n => <Row key={n} $pl={29}><IconSlot $w={18}><Folder /></IconSlot><Name>{n}</Name></Row>)}
        </TreeCol>
        <ListCol>
          <Row $h={18} $pl={7} $bold $light $line><IconSlot $w={48}><Name>Assets</Name></IconSlot><svg width="5" height="6"><path d="M0 0v6l5-3z" fill="#8a8a8a" /></svg></Row>
          <ListBody>
            <Files>
              {files.map(([n, icon, fold]) => <Row key={n} $pl={5}><IconSlot $w={11}>{fold && <Fold />}</IconSlot><IconSlot $w={18}>{icon}</IconSlot><Caption>{n}</Caption></Row>)}
            </Files>
            <Notes>
              <NoteLine>Terrain 하나 임의로 생성</NoteLine>
              <NoteLine>New Terrain이 생성됐는지 확인</NoteLine>
              <NoteLine ml={-2}>Import Raw를 통해서 올려놓은 raw파일 적용</NoteLine>
            </Notes>
          </ListBody>
          <ListFoot><Slider at={5} w={56} mr={0} /></ListFoot>
        </ListCol>
      </ProjectBody>
    </Frame>
  </Panel>
);

const Inspector = () => (
  <Panel $w={548} $h={928}>
    <TabRow>
      <Tab $on $w={98} $gap={5}><svg width="10" height="10" viewBox="0 0 10 10"><circle cx="5" cy="5" r="5" fill="#2b2b2b" /><path d="M4 2h2v1.500H4zM3.500 4.300H6V7.500h.8v1H3.400v-1h.8V5.200h-.7z" fill="#eee" /></svg>Inspector</Tab>
      <Tab $w={80} $pl={8}>Services</Tab>
      <TabTools $gap={7}><Lock /><PaneMenu /></TabTools>
    </TabRow>
    <InspectorBody>
      <InspectorList>
        <CompHead $h={20} $mt={3}>
          <IconSlot $w={13}><Fold open /></IconSlot><IconSlot $w={17}><TerrainCube /></IconSlot><IconSlot $w={16}><Check /></IconSlot><Name>Terrain</Name>
          <Spacer /><IconSlot $w={18}><Book /></IconSlot><GearMenu />
        </CompHead>
        <TerrainTools><Buttonset $w={225} icons={terrainIcons} on={6} /></TerrainTools>
        <HelpBox $top $h={40} $mb={1} $m="4px">Terrain Settings</HelpBox>
        {settings.map((r, i) => <Setting key={i} row={r} />)}
        <HelpBox $mb={1} $ls={0.155}><Warn s={20} /><span>Please note that modifying the resolution of the heightmap, detail map and control texture will<br />clear their contents, respectively.</span></HelpBox>
        <Head>Heightmap</Head>
        <Buttons><PushButton $w={91}>Import Raw...<Mark /></PushButton><PushButton $w={89}>Export Raw...</PushButton></Buttons>
        <Row $h={18} $pl={3}><IconSlot $w={12}><Fold /></IconSlot><Caption>Lighting</Caption></Row>
        <CompHead $h={19} $mt={8}>
          <IconSlot $w={13}><Fold open /></IconSlot><IconSlot $w={17}><Cube a="#c6f04c" b="#8fd61c" c="#6cb80e" /></IconSlot><IconSlot $w={16}><Check /></IconSlot><Name $ls={0.4}>Terrain Collider</Name>
          <Spacer /><IconSlot $w={18}><Book /></IconSlot><GearMenu />
        </CompHead>
        <Prop><Label>Material</Label><Field $w={298}>None (Physic Material)</Field><IconSlot $w={7} /><Target /></Prop>
        <Prop><Label>Terrain Data</Label><Field $w={298}><Cube s={13} />New Terrain 1</Field><IconSlot $w={7} /><Target /></Prop>
        <Prop><Label>Enable Tree Colliders</Label><Nudge><Check /></Nudge></Prop>
      </InspectorList>
      <Scroll>
        <ScrollGap $h={16} $cap><svg width="7" height="6"><path d="M0 6h7L3.500 0z" fill="#444" /></svg></ScrollGap>
        <ScrollGap $h={96} /><Thumb /><ScrollGap $h={50} />
        <ScrollGap $h={15} $cap><svg width="7" height="6"><path d="M0 0h7L3.500 6z" fill="#444" /></svg></ScrollGap>
      </Scroll>
    </InspectorBody>
  </Panel>
);

const TaskIcons = () => (
  <>
    <Task><svg width="16" height="16" viewBox="0 0 16 16"><path d="M0 2.300 6.500 1.400V7.600H0zM7.300 1.300 16 0v7.600H7.300zM0 8.400h6.500v6.200L0 13.700zM7.300 8.400H16V16l-8.700-1.300z" fill="#fff" /></svg></Task>
    <Task><svg width="16" height="16" viewBox="0 0 16 16"><circle cx="10" cy="6" r="5" fill="none" stroke="#fff" strokeWidth="1.200" /><path d="M6.400 9.600 .6 15.400" stroke="#fff" strokeWidth="1.300" /></svg></Task>
    <Task><svg width="17" height="15" viewBox="0 0 17 15"><path d="M1 0v2.500h9V0M1 15v-2.500h9V15M1 4.500h9v6H1zM14.500 0v15" fill="none" stroke="#fff" strokeWidth="1.200" /><path d="M13 4h3v3h-3z" fill="#fff" /></svg></Task>
    <Task $w={54}><svg width="20" height="21" viewBox="0 0 20 21"><path d="M0 9.500C.8 3.500 5 0 10.500 0 16.500 0 20 4.500 20 9.500v2.500H6.500c.3 3 2.800 4.500 6 4.500 2.300 0 4.300-.6 6-1.700v4.300C16.700 20.400 14.300 21 11.500 21 5.500 21 2 17.500 2 12.500 2 9 4 6.300 7 4.800 4 5.300 1.500 7 0 9.500zM6.800 8.300h7.400C14.200 6 13 4.500 10.600 4.500 8.500 4.500 7.200 6 6.800 8.300z" fill="#0a7ddb" /></svg></Task>
    <Task $w={45}><svg width="24" height="24" viewBox="0 0 24 24"><rect width="24" height="24" rx="1" fill="#e6e6e6" /><circle cx="14" cy="5" r="2.500" fill="#3c3c3c" /><path d="M3.500 7.500Q8 4.500 11.500 8.500l3 2.500h5M12 9.500Q9 12 8.500 14.500 6 15 2.500 20.500M8.500 14q6.500 0 8 3.500l5 3.500M10.500 8l-2 5" fill="none" stroke="#3c3c3c" strokeWidth="1.900" /></svg></Task>
    <Task $w={48} $m={2} $bg="#26402f" $line="#7fcf95"><PsTile>Ps</PsTile></Task>
    <Task $w={40} $m={4} $line="#7fcf95"><svg width="22" height="19" viewBox="0 0 22 19"><path d="M0 1h8l2 2h11v15H0z" fill="#fbd667" /><path d="M0 5h22v13H0z" fill="#fde590" /><path d="M4 19v-6q0-2 2-2h10q2 0 2 2v6h-4v-3H8v3z" fill="#33a7e6" /></svg></Task>
    <Task $w={48} $m={0} $bg="linear-gradient(90deg, #318a38 0 28px, #255c33 28px)" $line="#4fe03a"><UnityLogo s={22} /></Task>
  </>
);

export default function App() {
  return (
    <Screen>
      <Global />
      <Desktop>
        <Wallpaper w={8} h={1032} kind="left" />
        <Win>
          <TitleBar>
            <UnityLogo s={14} />
            <TitleText>Unity 2017.3.1f1 Personal (64bit) - testpro.unity - importSplat - PC, Mac &amp; Linux Standalone* &lt;DX11&gt;</TitleText>
            <WinButton $pl={2}><svg width="10" height="10"><path d="M0 5.500h10" stroke="#fff" /></svg></WinButton>
            <WinButton><svg width="10" height="10"><path d="M.5.5h9v9h-9z" fill="none" stroke="#fff" /></svg></WinButton>
            <WinButton><svg width="11" height="11"><path d="M.5.5l10 10M10.500.5l-10 10" stroke="#fff" /></svg></WinButton>
          </TitleBar>
          <MenuBar>{menus.map(([m, w]) => <MenuItem key={m} $w={w}>{m}</MenuItem>)}</MenuBar>
          <ToolStrip>
            <Buttonset $w={192} icons={toolIcons} />
            <ButtonGroup $h={18} $ml={20} $mt={2} $w={128}>
              <GroupItem $w={64} $first><svg width="11" height="9" viewBox="0 0 11 9"><path d="M0 2.500h4v3.500H0zM6.500 0h3v9h-3z" fill="#444" /><path d="M4 4.300h3" stroke="#c22" strokeWidth="1.500" /></svg><Caption>Center</Caption></GroupItem>
              <GroupItem $w={63}><svg width="12" height="12" viewBox="0 0 12 12"><circle cx="6" cy="6" r="5.300" fill="#8f8f8f" stroke="#555" /><path d="M1 6h10M6 .5v11M2 3h8M2 9h8" stroke="#ddd" strokeWidth=".6" /><path d="M5 2v5.500h4.500" stroke="#d22" strokeWidth="1.300" fill="none" /></svg><Caption>Global</Caption></GroupItem>
            </ButtonGroup>
            <Buttonset $ml={552} $w={96} icons={playIcons} />
            <Spacer />
            <DropButton $w={78} $pl={8}>
              <svg width="13" height="13" viewBox="0 0 13 13"><circle cx="6.500" cy="6.500" r="6" fill="#8c8c8c" /><path d="M3 6.500l3 3 6-8" fill="none" stroke="#fff" strokeWidth="2" /></svg><Caption>Collab</Caption><Caret c="#222" /></DropButton>
            <DropButton $w={32} $ml={10} $center><svg width="16" height="11" viewBox="0 0 16 11"><path d="M3.500 10.200Q1 10 1 8.200T3.200 5.800Q4 5.500 4 4.500 4.500.8 7.700.8T11.500 3.800Q12 5 13 5.200 15 6 15 7.800T12.800 10.200z" fill="#f6f6f6" stroke="#222" strokeWidth="1.200" /></svg></DropButton>
            <DropButton $w={80} $ml={10}><Caption>Account</Caption><Caret c="#222" /></DropButton>
            <DropButton $w={80} $ml={20}><Caption>Layers</Caption><Caret c="#222" /></DropButton>
            <DropButton $w={80} $ml={10}><Caption>Layout</Caption><Caret c="#222" /></DropButton>
          </ToolStrip>
          <Body>
            <LeftSide>
              <TopRow><Hierarchy /><ScenePanel /></TopRow>
              <Project />
            </LeftSide>
            <Inspector />
          </Body>
          <Status>
            <IconSlot $w={17}><Warn s={14} /></IconSlot>
            <StatusText>splatdatabase alphamap 0 texture size doesn't match alphamap resolution setting: please resave the terrain asset.</StatusText>
            <Progress>6/11 Visibility | 2 jobs</Progress>
          </Status>
        </Win>
        <Wallpaper w={8} h={1032} kind="right" />
        <Bottom><Wallpaper w={1920} h={8} kind="bottom" /></Bottom>
      </Desktop>
      <Taskbar>
        <TaskIcons />
        <Tray>
          <TrayIcon $w={16}><svg width="15" height="16" viewBox="0 0 15 16"><circle cx="10.500" cy="3" r="2.300" fill="none" stroke="#fff" /><circle cx="5" cy="8.500" r="2.300" fill="none" stroke="#fff" /><path d="M.8 15.500Q1 11.500 5 11.500t4 4M8 6.500Q14 4.800 14.300 10" fill="none" stroke="#fff" /></svg></TrayIcon>
          <TrayIcon $w={56} $mr={-7}><svg width="12" height="7" viewBox="0 0 12 7"><path d="M.5 6.500 6 1l5.500 5.500" fill="none" stroke="#fff" strokeWidth="1.200" /></svg></TrayIcon>
          <TrayIcon $w={5}><svg width="17" height="15" viewBox="0 0 17 15"><path d="M5 2.500h11v8H4V7" fill="none" stroke="#fff" strokeWidth="1.100" /><path d="M7 13.500h7M10.500 10.500v3" stroke="#fff" /><path d="M.5.5h4v4h-4zM2.500 4.500v9" fill="none" stroke="#fff" /></svg></TrayIcon>
          <TrayIcon $w={53}><svg width="17" height="17" viewBox="0 0 17 17"><path d="M1 13Q1 8 5 8.500T4 14q-2 2-3-1 5 4 8-3M7 11 11 1q2-1.500 2.500.5L9 12l-2.500 2zM9 6.500q6-1 6.500 1t-4 3" fill="none" stroke="#fff" strokeWidth="1.100" /></svg></TrayIcon>
          <TrayIcon $w={1}><svg width="15" height="15" viewBox="0 0 15 15"><circle cx="7.500" cy="7.500" r="7" fill="#7d8a80" /><path d="M4.500 4.500l6 6M10.500 4.500l-6 6" stroke="#fff" strokeWidth="1.500" /></svg></TrayIcon>
          <TrayIcon $w={10} />
          <Clock>오전 12:55<br />2018-07-01</Clock>
          <TrayIcon $w={2} />
          <TrayIcon $w={42}><Badge><svg width="16" height="15" viewBox="0 0 16 15"><path d="M0 0h16v12H8l-3 3v-3H0z" fill="#fff" /><path d="M3 3.500h10M3 6h10M3 8.500h7" stroke="#0c2d1b" /></svg><Count>2</Count></Badge></TrayIcon>
          <IconSlot $w={5} /><Peek />
        </Tray>
      </Taskbar>
    </Screen>
  );
}
